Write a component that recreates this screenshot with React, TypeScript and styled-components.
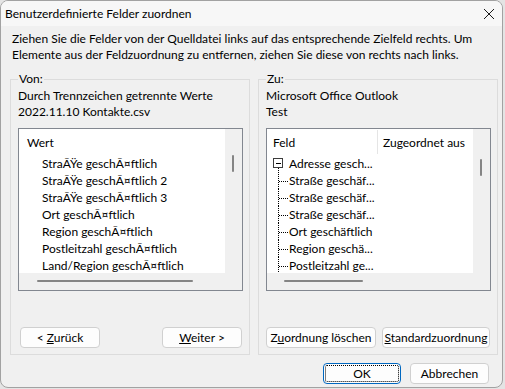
import styled, { createGlobalStyle } from "styled-components";

const GlobalStyle = createGlobalStyle`
  html, body {
    margin: 0;
    padding: 0;
    background: #e4e4e4;
  }
  body {
    font-family: Lato, "Noto Sans", sans-serif;
    font-size: 12px;
    color: #000;
  }
  * {
    box-sizing: border-box;
  }
`;

const Window = styled.div`
  width: 503px;
  height: 388px;
  border: 1px solid #a2a2a2;
  border-radius: 8px;
  overflow: hidden;
  background: #f0f0f0;
  display: flex;
  flex-direction: column;
`;

const TitleBar = styled.div`
  height: 25px;
  flex: none;
  display: flex;
  align-items: center;
  justify-content: space-between;
  padding: 0 7px 0 4px;
  background: #f7f7f7;
`;

const Title = styled.span`
  line-height: 16px;
`;

const Instructions = styled.p`
  margin: 5px 0 0 11px;
  line-height: 16px;
  white-space: nowrap;
`;

const GroupRow = styled.div`
  display: flex;
  gap: 8px;
  margin: 8px 4px 0 9px;
`;

const Group = styled.fieldset`
  width: 240px;
  height: 284px;
  margin: 0;
  padding: 1px 6px 6px 7px;
  border: 1px solid #dcdcdc;
  display: flex;
  flex-direction: column;
`;

const Legend = styled.legend`
  padding: 0 1px;
  line-height: 16px;
`;

const InfoLine = styled.div`
  line-height: 16px;
  white-space: nowrap;
`;

const ListBox = styled.div`
  margin-top: 8px;
  height: 163px;
  border: 1px solid #828790;
  background: #f0f0f0;
  display: grid;
  grid-template-columns: 1fr 17px;
  grid-template-rows: 1fr 17px;
`;

const ListContent = styled.div`
  background: #fff;
  overflow: hidden;
`;

const Header = styled.div`
  height: 26px;
  display: flex;
  align-items: center;
`;

const HeaderCell = styled.div<{ $width?: number; $divider?: boolean }>`
  display: flex;
  align-items: center;
  padding-left: ${(p) => (p.$divider ? 5 : p.$width ? 6 : 8)}px;
  width: ${(p) => (p.$width ? `${p.$width}px` : "auto")};
  border-left: ${(p) => (p.$divider ? "1px solid #e5e5e5" : "none")};
  height: ${(p) => (p.$divider ? "24px" : "100%")};
  white-space: nowrap;
`;

const Row = styled.div<{ $indent: number }>`
  height: 17px;
  line-height: 17px;
  padding-left: ${(p) => p.$indent}px;
  white-space: nowrap;
  display: flex;
  align-items: center;
`;

const VTrack = styled.div``;

const VThumb = styled.div<{ $top: number }>`
  width: 2px;
  height: 17px;
  margin: ${(p) => p.$top}px 0 0 7px;
  background: #858585;
  border-radius: 1px;
`;

const HTrack = styled.div`
  grid-column: 1 / 2;
`;

const HThumb = styled.div<{ $left: number; $width: number }>`
  height: 2px;
  width: ${(p) => p.$width}px;
  margin: 7px 0 0 ${(p) => p.$left}px;
  background: #858585;
  border-radius: 1px;
`;

const ButtonRow = styled.div<{ $pad: string }>`
  margin-top: 36px;
  display: flex;
  justify-content: space-between;
  padding: ${(p) => p.$pad};
`;

const Button = styled.button<{ $width: number; $default?: boolean }>`
  width: ${(p) => p.$width}px;
  height: 21px;
  padding: 0;
  font: inherit;
  color: #000;
  background: #fdfdfd;
  border: 1px solid ${(p) => (p.$default ? "#0067c0" : "#d0d0d0")};
  border-radius: 4px;
  white-space: nowrap;
  outline: ${(p) => (p.$default ? "1px dotted #000" : "none")};
  outline-offset: -3px;
`;

const Footer = styled.div`
  margin-top: 8px;
  display: flex;
  justify-content: flex-end;
  gap: 9px;
  padding-right: 13px;
`;

const CloseIcon = () => (
  <svg width="12" height="12" viewBox="0 0 12 12">
    <path d="M1 1L11 11M11 1L1 11" stroke="#1a1a1a" strokeWidth="1" />
  </svg>
);

const Collapse = () => (
  <svg width="16" height="17" viewBox="0 0 16 17" shapeRendering="crispEdges">
    <rect x="0.5" y="3.5" width="9" height="9" fill="#fff" stroke="#3c3c3c" />
    <path d="M2.5 8H7.5" stroke="#000" />
    <path d="M5 13V17" stroke="#000" strokeDasharray="1 1" />
  </svg>
);

const Branch = () => (
  <svg width="16" height="17" viewBox="0 0 16 17" shapeRendering="crispEdges">
    <path d="M5 0V17" stroke="#000" strokeDasharray="1 1" />
    <path d="M6 9H15" stroke="#000" strokeDasharray="1 1" />
  </svg>
);

const bad = (s: string) =>
  s.replace(/ß/g, "\u00C3\u0178").replace(/ä/g, "\u00C3\u00A4");

const sourceItems = [
  "Straße geschäftlich",
  "Straße geschäftlich 2",
  "Straße geschäftlich 3",
  "Ort geschäftlich",
  "Region geschäftlich",
  "Postleitzahl geschäftlich",
  "Land/Region geschäftlich",
].map(bad);

const targetItems = [
  "Straße geschäf...",
  "Straße geschäf...",
  "Straße geschäf...",
  "Ort geschäftlich",
  "Region geschä...",
  "Postleitzahl ge...",
];

export default function App() {
  return (
    <>
      <GlobalStyle />
      <Window>
        <TitleBar>
          <Title>Benutzerdefinierte Felder zuordnen</Title>
          <CloseIcon />
        </TitleBar>
        <Instructions>
          Ziehen Sie die Felder von der Quelldatei links auf das entsprechende Zielfeld rechts. Um
          <br />
          Elemente aus der Feldzuordnung zu entfernen, ziehen Sie diese von rechts nach links.
        </Instructions>
        <GroupRow>
          <Group>
            <Legend>Von:</Legend>
            <InfoLine>Durch Trennzeichen getrennte Werte</InfoLine>
            <InfoLine>2022.11.10 Kontakte.csv</InfoLine>
            <ListBox>
              <ListContent>
                <Header>
                  <HeaderCell>Wert</HeaderCell>
                </Header>
                {sourceItems.map((item, i) => (
                  <Row key={i} $indent={23}>
                    {item}
                  </Row>
                ))}
              </ListContent>
              <VTrack>
                <VThumb $top={26} />
              </VTrack>
              <HTrack>
                <HThumb $left={18} $width={156} />
              </HTrack>
            </ListBox>
            <ButtonRow $pad="0 1px 0 2px">
              <Button $width={80}>
                &lt; <u>Z</u>urück
              </Button>
              <Button $width={80}>
                <u>W</u>eiter &gt;
              </Button>
            </ButtonRow>
          </Group>
          <Group>
            <Legend>Zu:</Legend>
            <InfoLine>Microsoft Office Outlook</InfoLine>
            <InfoLine>Test</InfoLine>
            <ListBox>
              <ListContent>
                <Header>
                  <HeaderCell $width={110}>Feld</HeaderCell>
                  <HeaderCell $divider>Zugeordnet aus</HeaderCell>
                </Header>
                <Row $indent={6}>
                  <Collapse />
                  Adresse gesch...
                </Row>
                {targetItems.map((item, i) => (
                  <Row key={i} $indent={6}>
                    <Branch />
                    {item}
                  </Row>
                ))}
              </ListContent>
              <VTrack>
                <VThumb $top={30} />
              </VTrack>
              <HTrack>
                <HThumb $left={17} $width={79} />
              </HTrack>
            </ListBox>
            <ButtonRow $pad="0 1px 0 0">
              <Button $width={110}>
                Z<u>u</u>ordnung löschen
              </Button>
              <Button $width={108}>
                <u>S</u>tandardzuordnung
              </Button>
            </ButtonRow>
          </Group>
        </GroupRow>
        <Footer>
          <Button $width={78} $default>
            OK
          </Button>
          <Button $width={79}>Abbrechen</Button>
        </Footer>
      </Window>
    </>
  );
}
